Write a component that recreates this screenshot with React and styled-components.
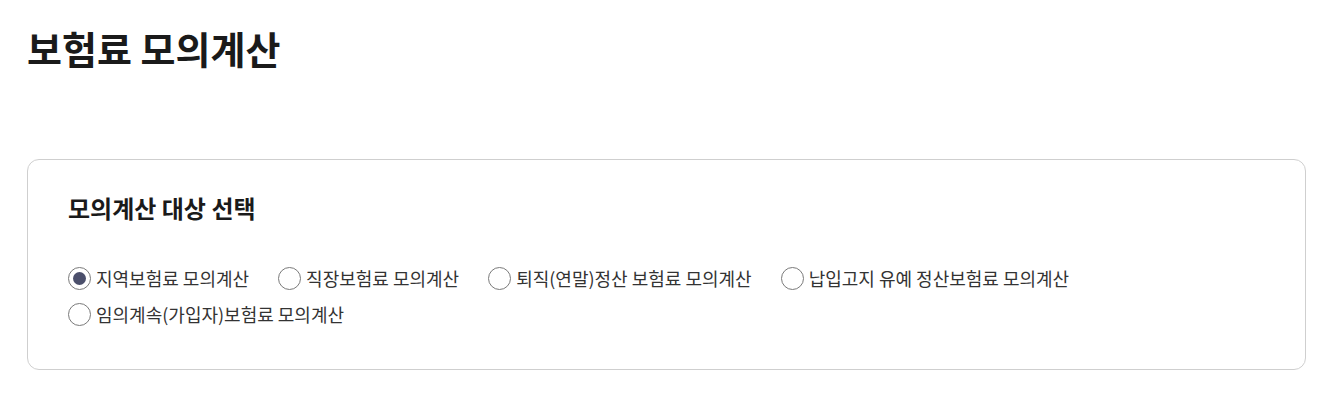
import React, { useState } from "react";
import styled, { createGlobalStyle } from "styled-components";

const Global = createGlobalStyle`
  html, body { margin: 0; padding: 0; background: #fff; }
  body { font-family: "Noto Sans CJK KR", "Noto Sans", sans-serif; color: #222; }
`;

const Page = styled.div`
  padding: 22px 18px 0 27px;
`;

const Title = styled.h1`
  margin: 0;
  font-size: 38px;
  font-weight: 700;
  line-height: 52px;
  color: #1a1a1a;
`;

const Card = styled.section`
  margin-top: 85px;
  border: 1px solid #cfcfcf;
  border-radius: 12px;
  padding: 32px 40px 40px;
  height: 211px;
  box-sizing: border-box;
`;

const CardTitle = styled.h2`
  margin: 0;
  font-size: 24px;
  font-weight: 700;
  line-height: 32px;
  color: #1a1a1a;
`;

const Options = styled.div`
  margin-top: 38px;
  display: flex;
  flex-wrap: wrap;
  column-gap: 29px;
  row-gap: 4px;
  max-width: 1080px;
`;

const Option = styled.label`
  display: inline-flex;
  align-items: center;
  gap: 5px;
  font-size: 18px;
  line-height: 32px;
  color: #333;
  cursor: pointer;
`;

const Radio = styled.input.attrs({ type: "radio" })`
  appearance: none;
  margin: 0;
  width: 23px;
  height: 23px;
  border: 1px solid #7a7a7a;
  border-radius: 50%;
  box-sizing: border-box;
  display: grid;
  place-content: center;
  background: #fff;
  cursor: pointer;
  &::before {
    content: "";
    width: 13px;
    height: 13px;
    border-radius: 50%;
    background: #4b4f6b;
    transform: scale(${(p) => (p.checked ? 1 : 0)});
  }
`;

const items = [
  "지역보험료 모의계산",
  "직장보험료 모의계산",
  "퇴직(연말)정산 보험료 모의계산",
  "납입고지 유예 정산보험료 모의계산",
  "임의계속(가입자)보험료 모의계산",
];

export default function App() {
  const [sel, setSel] = useState(0);
  return (
    <Page>
      <Global />
      <Title>보험료 모의계산</Title>
      <Card>
        <CardTitle>모의계산 대상 선택</CardTitle>
        <Options>
          {items.map((t, i) => (
            <Option key={t}>
              <Radio name="calc" checked={sel === i} onChange={() => setSel(i)} />
              {t}
            </Option>
          ))}
        </Options>
      </Card>
    </Page>
  );
}
